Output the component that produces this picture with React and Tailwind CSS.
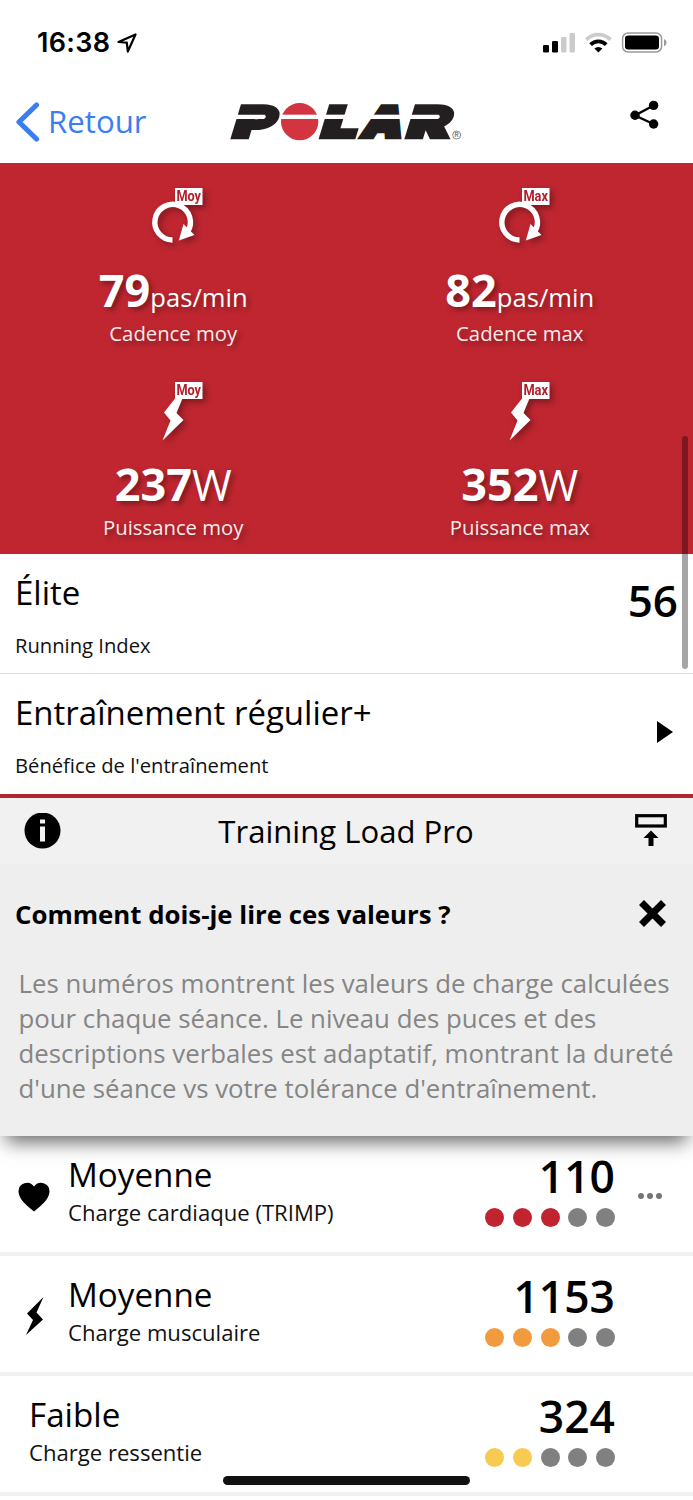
import React from 'react';
import clsx from 'clsx';

const stats = [
  { icon: 'cadence', tag: 'Moy', value: '79', unit: 'pas/min', label: 'Cadence moy' },
  { icon: 'cadence', tag: 'Max', value: '82', unit: 'pas/min', label: 'Cadence max' },
  { icon: 'power', tag: 'Moy', value: '237', unit: 'W', label: 'Puissance moy' },
  { icon: 'power', tag: 'Max', value: '352', unit: 'W', label: 'Puissance max' },
];

const loads = [
  { icon: 'heart', level: 'Moyenne', label: 'Charge cardiaque (TRIMP)', value: '110', filled: 3, color: 'bg-[#c2242f]', more: true },
  { icon: 'bolt', level: 'Moyenne', label: 'Charge musculaire', value: '1153', filled: 3, color: 'bg-[#f19a3e]' },
  { level: 'Faible', label: 'Charge ressentie', value: '324', filled: 2, color: 'bg-[#f7cb52]' },
];

function StatusBar() {
  return (
    <div className="flex h-[85px] items-center justify-between pl-[37px] pr-[26px]">
      <div className="flex items-center gap-[7px]">
        <span className="font-['Inter'] text-[27px] font-semibold leading-8 tracking-[0.3px]">16:38</span>
        <svg width="20" height="20" viewBox="0 0 20 20" fill="none" stroke="#000" strokeWidth="2.2" strokeLinejoin="round">
          <path d="M1.5 9 18.5 1.5 10.8 18.5 9.8 9.6Z" />
        </svg>
      </div>
      <svg width="124" height="22" viewBox="543 32 124 22">
        <rect x="543" y="45" width="6" height="7.5" rx="1.3" />
        <rect x="552" y="41" width="6" height="11.5" rx="1.3" />
        <rect x="561" y="37" width="5.5" height="15.5" rx="1.3" fill="#cbcbcb" />
        <rect x="569.5" y="33" width="5.5" height="19.5" rx="1.3" fill="#cbcbcb" />
        <g fill="none" strokeWidth="3.8">
          <path d="M586.3 39.6a17 17 0 0 1 24.2 0" stroke="#cbcbcb" />
          <path d="M590.6 44.6a11 11 0 0 1 15.6 0" stroke="#000" />
        </g>
        <path d="M598.4 52.4l-4-3.8a5.8 5.8 0 0 1 8 0Z" />
        <rect x="622.6" y="33" width="39" height="19" rx="5.5" fill="none" stroke="#9a9a9a" strokeWidth="1.5" />
        <rect x="625" y="35.5" width="34" height="14" rx="3.2" />
        <path d="M664 39q2.6 1 2.6 3.6t-2.6 3.6Z" fill="#9a9a9a" />
      </svg>
    </div>
  );
}

function Wordmark() {
  return (
    <svg width="260" height="75" viewBox="0 0 780 225">
      {/* heavy letters, the stroke closes the counters before the slits are cut */}
      <g fill="#231f20" stroke="#231f20" strokeWidth="13" strokeLinejoin="miter" strokeMiterlimit="2" transform="translate(0 162) skewX(-17)" fontFamily="Inter" fontWeight="900" fontSize="126">
        <text x="32" y="-6" textLength="121" lengthAdjust="spacingAndGlyphs">P</text>
        <text x="297" y="-6" textLength="105" lengthAdjust="spacingAndGlyphs">L</text>
        <text x="418" y="-6" textLength="119" lengthAdjust="spacingAndGlyphs">A</text>
        <text x="554" y="-6" textLength="124" lengthAdjust="spacingAndGlyphs">R</text>
      </g>
      <circle cx="239" cy="110" r="56" fill="#d23440" />
      <g fill="#fff">
        <path d="M36 89H134Q142 95 132 102H36Z" />
        <rect x="180" y="89" width="372" height="13" />
        <path d="M552 89H656Q664 95 654 102H552Z" />
      </g>
      <circle cx="710" cy="150" r="12" fill="none" stroke="#8a8a8a" strokeWidth="3" />
      <text x="710" y="157" textAnchor="middle" fontFamily="Inter" fontSize="19" fontWeight="600" fill="#777">R</text>
    </svg>
  );
}

function Header() {
  return (
    <header className="grid h-[78px] grid-cols-[220px_260px_1fr]">
      <button className="flex items-center pb-1 pl-4 text-[#3b7df2]">
        <svg width="24" height="40" viewBox="0 0 24 40" fill="none" stroke="currentColor" strokeWidth="5.2" strokeLinecap="round" strokeLinejoin="round">
          <path d="M20.5 3 3 20 20.5 37" />
        </svg>
        <span className="-mt-[2px] pl-2 text-[31.2px] leading-10">Retour</span>
      </button>
      <Wordmark />
      <div className="flex items-start justify-end pr-[34px] pt-[15px]">
        <svg width="29" height="30" viewBox="0 0 29 30">
          <path d="M23.5 5.5 5 15.5 23.5 24" fill="none" stroke="#000" strokeWidth="2.4" />
          <circle cx="23.6" cy="5.4" r="4.7" />
          <circle cx="5" cy="15.3" r="4.7" />
          <circle cx="23.6" cy="24" r="4.7" />
        </svg>
      </div>
    </header>
  );
}

function StatIcon({ type, tag }) {
  return (
    <svg width="80" height="76" viewBox="0 0 80 76" fill="#fff" className="drop-shadow-[3px_3px_3px_rgba(0,0,0,0.35)]">
      {type === 'cadence' ? (
        <>
          <path d="M39.5 57A17.8 17.8 0 1 1 54.5 49" fill="none" stroke="#fff" strokeWidth="5.4" />
          <path d="M50.5 41 61.5 52 45.8 57.4Z" />
        </>
      ) : (
        <path d="M44 19H50.5L43.5 36 50.5 43 29.5 63.5 37.5 43.5 31 35.5Z" />
      )}
      <rect x="42" y="5" width="27.5" height="17" />
      <text x="43.4" y="18.4" textLength="24.6" lengthAdjust="spacingAndGlyphs" fontFamily="Roboto" fontWeight="700" fontSize="14.5" fill="#b3202c" className="[text-shadow:none]">{tag}</text>
    </svg>
  );
}

function Stat({ icon, tag, value, unit, label }) {
  return (
    <div className="flex h-[194px] flex-col items-center pt-5 [text-shadow:3px_3px_5px_rgba(0,0,0,0.35)]">
      <StatIcon type={icon} tag={tag} />
      <div className="flex h-[60px] items-baseline pt-px">
        <span className="text-[45px] font-bold leading-[60px]">{value}</span>
        <span className={clsx('leading-none', unit === 'W' ? 'text-[43px]' : 'text-[25.6px]')}>{unit}</span>
      </div>
      <p className="text-[20.3px] leading-7 text-[#fbeaea]">{label}</p>
    </div>
  );
}

function SummaryRow({ title, subtitle, className, children }) {
  return (
    <div className={clsx('flex h-[120px] justify-between pl-[15px] pt-[15px]', className)}>
      <div>
        <h2 className="pt-px text-[33px] leading-[46px]">{title}</h2>
        <p className="mt-[15px] text-[20.2px] leading-7 text-[#111]">{subtitle}</p>
      </div>
      {children}
    </div>
  );
}

function LoadIcon({ type }) {
  if (type === 'heart') {
    return (
      <svg width="32" height="30" viewBox="0 0 32 30">
        <path d="M16 29.5C11 25 .5 18 .5 9.5A8.5 8.5 0 0 1 16 4.5 8.5 8.5 0 0 1 31.5 9.5C31.5 18 21 25 16 29.5Z" />
      </svg>
    );
  }
  return (
    <svg width="32" height="38" viewBox="0 0 32 38">
      <path d="M25.5 0 18.500 15.500 25 22.500 8 38 15 23 9 16.500Z" />
    </svg>
  );
}

function LoadRow({ icon, level, label, value, filled, color, more }) {
  return (
    <div className="flex h-[120px] border-b-4 border-[#f0f0f0] pt-[15px]">
      {icon ? (
        <div className="flex w-[68px] items-start pl-[18px] pt-[31px]">
          <div className={clsx(icon === 'bolt' && '-mt-[5px]')}>
            <LoadIcon type={icon} />
          </div>
        </div>
      ) : (
        <div className="w-[29px]" />
      )}
      <div className="flex-1">
        <h3 className="pt-px text-[33.2px] leading-[46px]">{level}</h3>
        <p className="-mt-px text-[22.1px] leading-[30px] text-[#111]">{label}</p>
      </div>
      <div className="-mt-px flex flex-col items-end">
        <span className="text-[44.4px] font-semibold leading-[52px]">{value}</span>
        <div className="mt-[6px] flex gap-[8.7px]">
          {[0, 1, 2, 3, 4].map((i) => (
            <span key={i} className={clsx('size-[19px] rounded-full', i < filled ? color : 'bg-[#808080]')} />
          ))}
        </div>
      </div>
      <div className="flex w-[78px] gap-[3px] pl-[23px] pt-[42px]">
        {more && [0, 1, 2].map((i) => <span key={i} className="size-[6px] rounded-full bg-[#757575]" />)}
      </div>
    </div>
  );
}

export default function App() {
  return (
    <div className="relative h-[1500px] w-[693px] overflow-hidden bg-white font-['Open_Sans',sans-serif] text-black">
      <StatusBar />
      <Header />

      <section className="grid h-[391px] grid-cols-2 content-start bg-[#bf2630] text-white">
        {stats.map((s) => <Stat key={s.label} {...s} />)}
      </section>

      <SummaryRow title="Élite" subtitle="Running Index" className="border-b border-[#dde1e1] pr-[15px]">
        <span className="pt-px text-[44px] font-semibold leading-[60px]">56</span>
      </SummaryRow>
      <SummaryRow title="Entraînement régulier+" subtitle="Bénéfice de l'entraînement" className="pr-5">
        <svg width="16" height="22" viewBox="0 0 16 22" className="mt-8">
          <path d="M0 0 16 11 0 22Z" />
        </svg>
      </SummaryRow>

      <section className="relative z-10 shadow-[0_12px_18px_-6px_rgba(0,0,0,0.6)]">
        <div className="flex h-[70px] items-center justify-between border-t-4 border-[#b0262f] bg-[#f1f1f1] pl-6 pr-[26px]">
          <svg width="37" height="37" viewBox="0 0 37 37">
            <circle cx="18.5" cy="17.5" r="18" />
            <path d="M16 6.5h5v4h-5ZM16 13.5H21V28.5H16Z" fill="#f1f1f1" />
          </svg>
          <h2 className="-ml-1 text-[31.1px] leading-[66px]">Training Load Pro</h2>
          <svg width="32" height="34" viewBox="0 0 32 34">
            <rect x="1.7" y="1.7" width="28.6" height="10.3" fill="none" stroke="#000" strokeWidth="3.2" />
            <path d="M16 16.5 23.5 24H18.5V32H13.5V24H8.5Z" />
          </svg>
        </div>
        <div className="h-[272px] bg-[#eeeeee] pt-8">
          <div className="flex h-9 justify-between pl-[15px] pr-[27px]">
            <h3 className="text-[25.8px] font-bold leading-9">Comment dois-je lire ces valeurs ?</h3>
            <svg width="27" height="27" viewBox="0 0 27 27" stroke="#000" strokeWidth="7" className="mt-1">
              <path d="M2.5 2.5 24.5 24.5M24.5 2.5 2.5 24.5" />
            </svg>
          </div>
          <p className="mt-[34px] whitespace-nowrap pl-[18.500px] text-[25.8px] leading-[35px] text-[#858585]">
            Les numéros montrent les valeurs de charge calculées<br />
            pour chaque séance. Le niveau des puces et des<br />
            descriptions verbales est adaptatif, montrant la dureté<br />
            d'une séance vs votre tolérance d'entraînement.
          </p>
        </div>
      </section>

      {loads.map((l) => <LoadRow key={l.label} {...l} />)}

      {/* scroll thumb and home indicator float over the page */}
      <div className="absolute right-[5px] top-[436px] z-20 h-[233px] w-[6px] rounded-full bg-black/35" />
      <div className="absolute left-[223px] top-[1476px] z-20 h-[9px] w-[247px] rounded-full bg-[#111]" />
    </div>
  );
}
